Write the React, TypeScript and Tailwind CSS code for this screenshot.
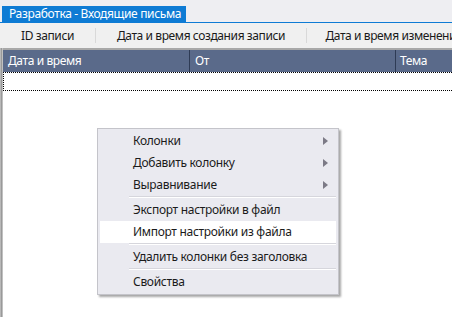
import { ReactNode } from "react";

const FONT = { fontFamily: '"Noto Sans", "Open Sans", sans-serif' };

function MenuItem({ label, sub, active }: { label: string; sub?: boolean; active?: boolean }) {
  return (
    <div
      className={`flex h-[22px] items-center justify-between pr-[10px] text-[12px] tracking-[-0.3px] text-[#1b1b1b] ${
        active ? "mx-[2px] bg-white pl-[33px]" : "pl-[35px]"
      }`}
    >
      <span>{label}</span>
      {sub && (
        <svg width="5" height="8" viewBox="0 0 5 8">
          <path d="M0 0 L5 4 L0 8 Z" fill="#7c7a86" />
        </svg>
      )}
    </div>
  );
}

function Sep() {
  return <div className="mb-[1px] ml-[31px] mr-[2px] h-[2px] border-t border-[#d6d6dc] bg-white" />;
}

function HeadCell({ w, children, last }: { w: string; children: ReactNode; last?: boolean }) {
  return (
    <div
      className={`${w} my-[5px] flex shrink-0 items-center justify-center overflow-hidden whitespace-nowrap ${
        last ? "" : "border-r border-[#d9d9d9]"
      }`}
    >
      {children}
    </div>
  );
}

export default function App() {
  return (
    <div className="relative h-[317px] w-[452px] overflow-hidden bg-white" style={FONT}>
      {/* title tab */}
      <div className="flex h-[22px] items-end bg-[#eeeef2] pl-[2px]">
        <div className="flex h-[16px] items-center bg-[#0e7bd4] pl-[7px] pr-[5px] text-[12px] leading-none tracking-[-0.35px] text-white">
          Разработка - Входящие письма
        </div>
      </div>
      <div className="h-[1px] bg-[#0e7bd4]" />

      {/* grouping columns toolbar */}
      <div className="flex h-[25px] bg-[#f0f0f0] text-[12px] tracking-[-0.4px] text-[#1a1a1a]">
        <HeadCell w="w-[96px]">ID записи</HeadCell>
        <HeadCell w="w-[211px]">Дата и время создания записи</HeadCell>
        <HeadCell w="w-[215px]" last>
          Дата и время изменения записи
        </HeadCell>
      </div>

      {/* grid */}
      <div className="flex flex-1">
        <div className="w-[3px] shrink-0 bg-gradient-to-r from-[#c8c8c8] via-[#9a9a9a] to-[#d4d4d4]" />
        <div className="flex-1">
          <div className="h-[2px] bg-[#a8a8a8]" />
          <div className="flex h-[22px] bg-[#5a6a8a] text-[12px] tracking-[-0.4px] text-white">
            <div className="flex w-[187px] items-center border-r border-[#2e3b55] pl-[5px]">Дата и время</div>
            <div className="flex w-[205px] items-center pl-[5px]">От</div>
            <div className="flex flex-1 items-center border-l border-[#2e3b55] pl-[4px]">Тема</div>
          </div>
          <div className="h-[19px] border-b border-l border-t border-dotted border-black" />
          <div className="h-[230px]" />
        </div>
      </div>

      {/* context menu */}
      <div className="absolute left-[97px] top-[128px] w-[242px] border border-[#c4c4ca] bg-[#eaeaf0] py-[1px] shadow-[2px_2px_2px_rgba(0,0,0,0.35)]">
        <MenuItem label="Колонки" sub />
        <MenuItem label="Добавить колонку" sub />
        <MenuItem label="Выравнивание" sub />
        <Sep />
        <MenuItem label="Экспорт настройки в файл" />
        <MenuItem label="Импорт настройки из файла" active />
        <Sep />
        <MenuItem label="Удалить колонки без заголовка" />
        <Sep />
        <MenuItem label="Свойства" />
      </div>
    </div>
  );
}
